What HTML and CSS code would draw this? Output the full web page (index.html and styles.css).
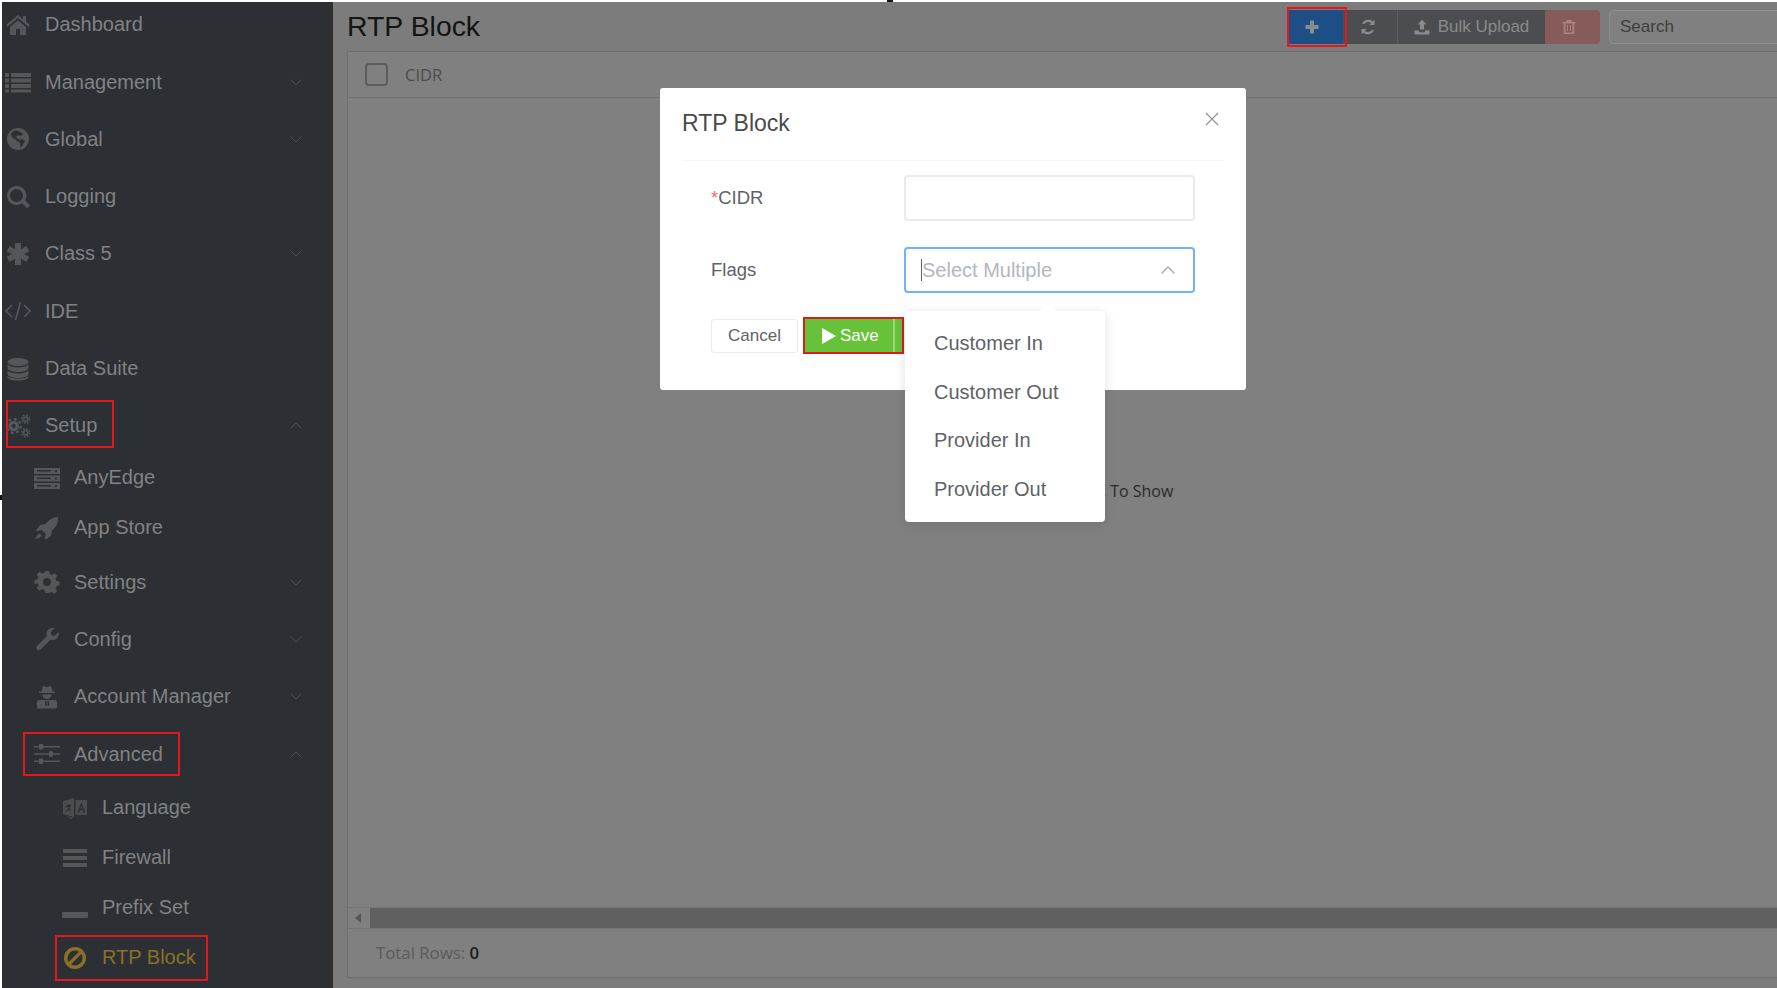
FILE: index.html
```html
<!DOCTYPE html>
<html>
<head>
    <link rel="stylesheet" href="styles.css">
</head>
<body>
    <div class="sidebar">
        <div class="nav-row nav-first">
            <svg class="nav-icon" viewBox="0 0 26 24"><path d="M13 3 1 13l1.500 1.800L13 6l10.500 8.800L25 13l-4-3.300V4h-3v3.200zM5 15v8h6v-6h4v6h6v-8l-8-6.700z"/></svg>
            <span>Dashboard</span>
        </div>
        <div class="nav-row">
            <svg class="nav-icon" viewBox="0 0 26 24"><path d="M0 3h4v4H0zM6 3h20v4H6zM0 8.500h4v4H0zM6 8.500h20v4H6zM0 14h4v4H0zM6 14h20v4H6zM0 19.500h4v3H0zM6 19.500h20v3H6z"/></svg>
            <span>Management</span>
            <svg class="chevron" viewBox="0 0 12 7"><path d="M0.500 0.500 6 6l5.500-5.500"/></svg>
        </div>
        <div class="nav-row">
            <svg class="nav-icon" viewBox="0 0 26 24"><path fill-rule="evenodd" d="M13 1a11 11 0 1 0 0 22 11 11 0 0 0 0-22zM9 4c2-1 4 0 6 1l3 2-2 2-3-1-2 2 3 3 3-1 3 2-3 5-2 1 0-4-4-3-3-2-2-3 1-3z"/></svg>
            <span>Global</span>
            <svg class="chevron" viewBox="0 0 12 7"><path d="M0.500 0.500 6 6l5.500-5.500"/></svg>
        </div>
        <div class="nav-row">
            <svg class="nav-icon" viewBox="0 0 26 24"><path fill-rule="evenodd" d="M11.500 1a9.500 9.500 0 1 0 5.600 17.200l5 5 2.900-2.900-5-5A9.500 9.500 0 0 0 11.500 1zm0 3a6.500 6.500 0 1 1 0 13 6.500 6.500 0 0 1 0-13z"/></svg>
            <span>Logging</span>
        </div>
        <div class="nav-row">
            <svg class="nav-icon" viewBox="0 0 26 24"><path d="M10 1h6v6.200l5.300-3.100 3 5.200L19 12l5.300 2.700-3 5.200-5.300-3.100V23h-6v-6.200l-5.300 3.100-3-5.200L7 12 1.700 9.300l3-5.200L10 7.200z"/></svg>
            <span>Class 5</span>
            <svg class="chevron" viewBox="0 0 12 7"><path d="M0.500 0.500 6 6l5.500-5.500"/></svg>
        </div>
        <div class="nav-row">
            <svg class="nav-icon nav-line" viewBox="0 0 26 24"><path d="M7 6 1 12l6 6M19 6l6 6-6 6M15.500 3l-5 18"/></svg>
            <span>IDE</span>
        </div>
        <div class="nav-row">
            <svg class="nav-icon" viewBox="0 0 26 24"><path d="M13 1c6 0 10.500 1.800 10.500 4S19 9 13 9 2.500 7.200 2.500 5 7 1 13 1zM2.500 7.500C4.500 9.500 9 10.500 13 10.500s8.500-1 10.500-3V11c0 2.200-4.500 4-10.500 4S2.500 13.200 2.500 11zM2.500 13.500c2 2 6.500 3 10.500 3s8.500-1 10.500-3V17c0 2.200-4.500 4-10.500 4S2.500 19.200 2.500 17z"/><path d="M2.500 19c2 2 6.500 2.500 10.500 2.500s8.500-.5 10.500-2.500v1c0 2.200-4.500 3.500-10.500 3.500S2.500 22.200 2.500 20z"/></svg>
            <span>Data Suite</span>
        </div>
        <div class="nav-row">
            <svg class="nav-icon nav-gears" viewBox="0 0 27 24">
                <circle cx="9" cy="12" r="3.800" stroke-width="3.400"/>
                <circle cx="9" cy="12" r="7.300" stroke-width="2.400" stroke-dasharray="3 2.730"/>
                <circle cx="21.500" cy="5" r="2.300" stroke-width="1.600"/>
                <circle cx="21.500" cy="5" r="4.200" stroke-width="1.600" stroke-dasharray="1.700 1.600"/>
                <circle cx="21.500" cy="19" r="2.300" stroke-width="1.600"/>
                <circle cx="21.500" cy="19" r="4.200" stroke-width="1.600" stroke-dasharray="1.700 1.600"/>
            </svg>
            <span>Setup</span>
            <svg class="chevron" viewBox="0 0 12 7"><path d="M0.500 6.500 6 1l5.500 5.500"/></svg>
        </div>

        <div class="nav-row nav-sub nav-short nav-lift">
            <svg class="nav-icon" viewBox="0 0 26 24"><path fill-rule="evenodd" d="M0 2h26v6H0zM3 4v1.500h14V4zM21 4v2h2V4zM0 9.500h26v6H0zM3 11.500V13h14v-1.500zM21 11.500v2h2v-2zM0 17h26v6H0zM3 19v1.500h14V19zM21 19v2h2v-2z"/></svg>
            <span>AnyEdge</span>
        </div>
        <div class="nav-row nav-sub nav-short nav-lift-small">
            <svg class="nav-icon" viewBox="0 0 26 24"><path d="M24 1c.5 6-2 10-6 13.500L17 20l-5.500 3.500-1-1 1.200-4.500-4-4-4.500 1.200-1-1L6 9 11.500 8C15 4 19 1 24 1zM5 17.500c1 0 2.500 1.500 2.500 2.500-1 1.500-3.500 2.500-6 3 .5-2.500 2-4.500 3.500-5.500z"/></svg>
            <span>App Store</span>
        </div>
        <div class="nav-row nav-sub">
            <svg class="nav-icon" viewBox="0 0 26 24"><path fill-rule="evenodd" d="M11 1h4l.7 3.200 2 .8 2.800-1.800 2.800 2.800-1.800 2.800.8 2 3.200.7v4l-3.200.7-.8 2 1.800 2.800-2.800 2.800-2.800-1.800-2 .8L15 23h-4l-.7-3.200-2-.8-2.800 1.800-2.800-2.800 1.800-2.800-.8-2L.5 14v-4l3.200-.7.8-2-1.800-2.800 2.800-2.800 2.800 1.800 2-.8zM13 8a4 4 0 1 0 0 8 4 4 0 0 0 0-8z"/></svg>
            <span>Settings</span>
            <svg class="chevron" viewBox="0 0 12 7"><path d="M0.500 0.500 6 6l5.500-5.500"/></svg>
        </div>
        <div class="nav-row nav-sub">
            <svg class="nav-icon" viewBox="0 0 26 24"><path d="M24.500 5c.8 3-.2 5.500-2.500 7-2 1.200-4 1.200-5.500.5L6.500 22.500c-1 1-2.500 1-3.500 0s-1-2.500 0-3.500l10-10c-.8-2-.5-4 .8-5.800C15.300 1.200 18 .5 20.500 1.200L16.500 5.200l1 3 3 1z"/></svg>
            <span>Config</span>
            <svg class="chevron" viewBox="0 0 12 7"><path d="M0.500 0.500 6 6l5.500-5.500"/></svg>
        </div>
        <div class="nav-row nav-sub">
            <svg class="nav-icon" viewBox="0 0 26 24"><path fill-rule="evenodd" d="M9 1l4 1 4-1 1.500 5.500h2.500V8H5V6.500h2.500zM8.500 9.500h9c0 2.500-2 4.500-4.500 4.500s-4.500-2-4.500-4.500zM5 15h16c1.500 0 2 1 2 2v5c0 1-.5 1.500-1.500 1.500h-17C3.500 23.500 3 23 3 22v-5c0-1 .5-2 2-2zM11 16v5h1.500v-5zM13.500 16v5H15v-5z"/></svg>
            <span>Account Manager</span>
            <svg class="chevron" viewBox="0 0 12 7"><path d="M0.500 0.500 6 6l5.500-5.500"/></svg>
        </div>
        <div class="nav-row nav-sub">
            <svg class="nav-icon" viewBox="0 0 26 24"><path d="M0 4h5V2h4v2h17v1.500H9v2H5v-2H0zM0 11.300h15v-2h4v2h7v1.500h-7v2h-4v-2H0zM0 18.500h5v-2h4v2h17V20H9v2H5v-2H0z"/></svg>
            <span>Advanced</span>
            <svg class="chevron" viewBox="0 0 12 7"><path d="M0.500 6.500 6 1l5.500 5.500"/></svg>
        </div>

        <div class="nav-row nav-subsub">
            <svg class="nav-icon nav-faint" viewBox="0 0 26 24"><path fill-rule="evenodd" d="M1 5l11-3v19L1 18zM6 8l-1 2H3v1.200h3.500C6 12.500 5 14 3.500 15l.7 1c1-.7 1.800-1.500 2.500-2.500l1.500 1.500.7-1-1.500-1.800c.4-.8.700-1.600.8-2.200H9V8.800H7zM13.500 4H25v15H13.500zM19.200 6.500 15.500 16.500h2l.8-2.200h2.400l.8 2.200h2zM19.500 9.500l.7 3h-1.500z"/><path d="M4 19.500 9 23l3-1.500H9z"/></svg>
            <span>Language</span>
        </div>
        <div class="nav-row nav-subsub">
            <svg class="nav-icon" viewBox="0 0 26 24"><path d="M1 3h24v4H1zM1 10h24v4H1zM1 17h24v4H1z"/></svg>
            <span>Firewall</span>
        </div>
        <div class="nav-row nav-subsub">
            <svg class="nav-icon nav-low" viewBox="0 0 26 24"><rect x="0" y="9" width="26" height="6" rx="1"/></svg>
            <span>Prefix Set</span>
        </div>
        <div class="nav-row nav-subsub nav-active">
            <svg class="nav-icon" viewBox="0 0 26 24"><path fill-rule="evenodd" d="M13 1a11 11 0 1 0 0 22 11 11 0 0 0 0-22zm0 3.500c1.500 0 2.900.4 4 1.200L6.700 16c-.8-1.100-1.200-2.500-1.200-4A7.500 7.500 0 0 1 13 4.500zm6.300 3.500c.8 1.100 1.200 2.500 1.200 4a7.500 7.500 0 0 1-11.500 6.300z"/></svg>
            <span>RTP Block</span>
        </div>

        <div class="mark mark-setup"></div>
        <div class="mark mark-advanced"></div>
        <div class="mark mark-rtp"></div>
    </div>

    <div class="main">
        <div class="page-head">
            <h1>RTP Block</h1>
            <div class="toolbar">
                <div class="btn-group">
                    <button class="tool-btn tool-add">
                        <svg class="tool-icon" viewBox="0 0 16 16"><path d="M6 1.500h4V6h4.500v4H10v4.500H6V10H1.500V6H6z"/></svg>
                    </button>
                    <button class="tool-btn tool-refresh">
                        <svg class="tool-icon" viewBox="0 0 16 16"><path d="M13.800 1.500v4.700H9.100l1.800-1.800C9 3 6.200 3.400 4.700 5.400L2.600 5C4.500 1.500 9 .6 12.200 3zM2.200 14.500V9.800h4.700l-1.800 1.800c1.900 1.400 4.700 1 6.200-1l2.100.4c-1.900 3.500-6.400 4.400-9.600 2z"/></svg>
                    </button>
                    <button class="tool-btn tool-upload">
                        <svg class="tool-icon" viewBox="0 0 16 16"><path d="M8 .5 12.500 5.500H10V10.500H6V5.500H3.500zM0.500 11.500H5v.8c0 .5.500 1 1 1h4c.5 0 1-.5 1-1v-.8h4.500V15c0 .3-.2.500-.5.500H1c-.3 0-.5-.2-.5-.5z"/></svg>
                        Bulk Upload
                    </button>
                    <button class="tool-btn tool-delete">
                        <svg class="tool-icon" viewBox="0 0 16 16"><path fill-rule="evenodd" d="M5.500 1h5l1 2h3v1.500h-1.200V15H2.700V4.500H1.500V3h3zM4.500 4.500V13.500h7V4.500zM6 6h1v6H6zM9 6h1v6H9z"/></svg>
                    </button>
                </div>
                <div class="search">Search</div>
            </div>
        </div>

        <div class="grid-panel">
            <div class="grid-head">
                <span class="grid-check"></span>
                <span class="grid-col">CIDR</span>
            </div>
            <div class="grid-body">No Rows To Show</div>
            <div class="grid-scroll">
                <span class="scroll-btn"></span>
                <span class="scroll-thumb"></span>
            </div>
            <div class="grid-foot">Total Rows: <b>0</b></div>
        </div>
        <div class="mark mark-add"></div>
    </div>

    <div class="modal">
        <div class="modal-head">
            <span class="modal-title">RTP Block</span>
            <svg class="modal-close" viewBox="0 0 14 14"><path d="M1 1l12 12M13 1 1 13"/></svg>
        </div>
        <div class="modal-body">
            <div class="form-row">
                <label class="form-label"><span class="required">*</span>CIDR</label>
                <div class="field"></div>
            </div>
            <div class="form-row">
                <label class="form-label">Flags</label>
                <div class="field field-open">
                    <span class="caret"></span>
                    <span class="placeholder">Select Multiple</span>
                    <svg class="field-arrow" viewBox="0 0 14 8"><path d="M0.500 7.500 7 1l6.500 6.500"/></svg>
                </div>
            </div>
            <div class="form-actions">
                <button class="btn-cancel">Cancel</button>
                <button class="btn-save">
                    <svg class="save-icon" viewBox="0 0 14 16"><path d="M0 0 14 8 0 16z"/></svg>
                    Save
                </button>
            </div>
        </div>
        <div class="dropdown">
            <div class="dropdown-item">Customer In</div>
            <div class="dropdown-item">Customer Out</div>
            <div class="dropdown-item">Provider In</div>
            <div class="dropdown-item">Provider Out</div>
        </div>
    </div>

    <div class="tick tick-top"></div>
    <div class="tick tick-left"></div>
</body>
</html>
```

FILE: styles.css
```css
* {
    box-sizing: border-box;
}

html, body {
    margin: 0;
    height: 988px;
    overflow: hidden;
}

body {
    position: relative;
    display: flex;
    padding: 2px 0 0 2px;
    background-color: #ffffff;
    font-family: "Liberation Sans", Arial, sans-serif;
}

/* sidebar */
.sidebar {
    position: relative;
    flex: none;
    width: 331px;
    background-color: #2c2f33;
    color: #808285;
}

.nav-row {
    display: flex;
    align-items: center;
    height: 57.3px;
    padding: 0 31px 0 3px;
    font-size: 20px;
}

.nav-first {
    height: 44px;
    margin-bottom: 7.4px;
}

.nav-sub {
    padding-left: 32px;
}

.nav-subsub {
    height: 50px;
    padding-left: 60px;
}

.nav-short {
    height: 49.5px;
}

.nav-lift {
    padding-bottom: 3.4px;
}

.nav-lift-small {
    padding-bottom: 2px;
}

.nav-icon {
    flex: none;
    width: 26px;
    height: 24px;
    margin-right: 14px;
    fill: #54575a;
}

.nav-line {
    fill: none;
    stroke: #54575a;
    stroke-width: 1.6;
}

.nav-gears {
    fill: none;
    stroke: #54575a;
}

.nav-faint {
    opacity: 0.75;
}

.nav-low {
    transform: translateY(7px);
}

.chevron {
    width: 12px;
    height: 7px;
    margin-left: auto;
    fill: none;
    stroke: #4c4f52;
    stroke-width: 1;
}

.nav-active {
    color: #8a7128;
}

.nav-active .nav-icon {
    fill: #8a7128;
}

/* red annotation boxes */
.mark {
    position: absolute;
    border: 2px solid #e3181f;
}

.mark-setup {
    left: 4px;
    top: 398px;
    width: 108px;
    height: 48px;
}

.mark-advanced {
    left: 21px;
    top: 730px;
    width: 157px;
    height: 44px;
}

.mark-rtp {
    left: 53px;
    top: 933px;
    width: 153px;
    height: 46px;
}

.mark-add {
    left: 954px;
    top: 5px;
    width: 60px;
    height: 40px;
}

/* page behind the modal */
.main {
    position: relative;
    flex: 1;
    min-width: 0;
    overflow: hidden;
    padding-left: 14px;
    background-color: #7b7c7b;
}

.page-head {
    display: flex;
    align-items: center;
    width: 1526px;
    height: 49px;
}

h1 {
    margin: 0;
    font-size: 28.4px;
    font-weight: 400;
    color: #141414;
}

.toolbar {
    display: flex;
    gap: 9px;
    margin-left: auto;
}

.btn-group {
    display: flex;
    height: 34px;
}

.tool-btn {
    display: flex;
    align-items: center;
    justify-content: center;
    gap: 8px;
    height: 34px;
    border: none;
    padding: 0;
    background-color: #4c4d50;
    color: #8a8b8c;
    font-family: inherit;
    font-size: 17px;
}

.tool-icon {
    width: 16px;
    height: 16px;
    fill: #8a8b8c;
}

.tool-add {
    width: 55px;
    padding-right: 7px;
    background-color: #1d4f85;
}

.tool-refresh {
    width: 55px;
    padding-right: 5px;
    border-right: 1px solid #5c5d60;
}

.tool-refresh .tool-icon {
    width: 18px;
    height: 18px;
}

.tool-upload {
    width: 147px;
}

.tool-delete {
    width: 55px;
    padding-right: 7px;
    border-radius: 0 4px 4px 0;
    background-color: #875b5a;
}

.tool-delete .tool-icon {
    fill: #a88382;
}

.search {
    width: 264px;
    height: 34px;
    padding: 0 10px;
    border: 1px solid #8d8e8d;
    border-radius: 4px;
    background-color: #7f807f;
    color: #3e3e3e;
    font-size: 17px;
    line-height: 32px;
}

.grid-panel {
    display: flex;
    flex-direction: column;
    width: 1526px;
    height: 927px;
    border: 1px solid #6e6f6e;
    background-color: #7f807f;
    font-family: "Open Sans", Arial, sans-serif;
}

.grid-head {
    display: flex;
    align-items: center;
    gap: 17px;
    height: 46px;
    padding-left: 17px;
    border-bottom: 1px solid #707170;
}

.grid-check {
    width: 23px;
    height: 23px;
    border: 2px solid #5b5d5d;
    border-radius: 4px;
}

.grid-col {
    font-size: 16.5px;
    font-weight: 500;
    color: #4c4d4d;
}

.grid-body {
    display: flex;
    align-items: center;
    justify-content: center;
    flex: 1;
    padding: 0 6px 23px 0;
    font-size: 16px;
    color: #2b2b2b;
}

.grid-scroll {
    display: flex;
    height: 21px;
    border-top: 1px solid #747574;
}

.scroll-btn {
    position: relative;
    width: 22px;
}

.scroll-btn::before {
    content: "";
    position: absolute;
    left: 7px;
    top: 5px;
    border: 5px solid transparent;
    border-left: none;
    border-right: 6px solid #565756;
}

.scroll-thumb {
    flex: 1;
    background-color: #606060;
}

.grid-foot {
    height: 49px;
    padding: 12px 0 0 28px;
    border-top: 1px solid #747574;
    font-size: 16.8px;
    color: #5a5b5b;
}

.grid-foot b {
    font-weight: 600;
    color: #1c1c1c;
}

/* modal */
.modal {
    position: absolute;
    left: 660px;
    top: 88px;
    width: 586px;
    height: 302px;
    border-radius: 3px;
    background-color: #ffffff;
}

.modal-head {
    position: relative;
    height: 73px;
    margin: 0 22px;
    border-bottom: 1px solid #f4f6f8;
    padding-top: 22px;
}

.modal-title {
    font-size: 23px;
    color: #4a4a4a;
}

.modal-close {
    position: absolute;
    right: 5px;
    top: 24px;
    width: 14px;
    height: 14px;
    fill: none;
    stroke: #909399;
    stroke-width: 1.3;
}

.modal-body {
    display: flex;
    flex-direction: column;
    gap: 26px;
    padding: 14px 0 0 51px;
}

.form-row {
    display: flex;
    align-items: center;
}

.form-label {
    width: 193px;
    margin-bottom: 1px;
    font-size: 18.5px;
    color: #606266;
}

.required {
    color: #f56c6c;
}

.field {
    display: flex;
    align-items: center;
    width: 291px;
    height: 46px;
    padding: 0 18px 0 15px;
    border: 2px solid #e8ebf0;
    border-radius: 4px;
}

.field-open {
    border-color: #6db3fb;
}

.caret {
    width: 1px;
    height: 22px;
    background-color: #606266;
}

.placeholder {
    font-size: 20px;
    color: #b3b6bd;
}

.field-arrow {
    width: 14px;
    height: 8px;
    margin-left: auto;
    fill: none;
    stroke: #a8abb2;
    stroke-width: 1.3;
}

.form-actions {
    display: flex;
    align-items: center;
    gap: 5px;
    margin-top: -2px;
}

.btn-cancel {
    width: 87px;
    height: 34px;
    border: 1px solid #e8ebf0;
    border-radius: 3px;
    background-color: #ffffff;
    color: #606266;
    font-family: inherit;
    font-size: 17px;
}

.btn-save {
    display: flex;
    align-items: center;
    gap: 4px;
    width: 101px;
    height: 37px;
    padding-left: 17px;
    border: 2px solid #e3181f;
    background: linear-gradient(to right, #67c23a 88px, #9ad97c 88px, #9ad97c 90px, #67c23a 90px);
    color: #ffffff;
    font-family: inherit;
    font-size: 17px;
}

.save-icon {
    width: 14px;
    height: 16px;
    fill: #ffffff;
}

.dropdown {
    position: absolute;
    left: 245px;
    top: 223px;
    width: 200px;
    height: 211px;
    padding-top: 8px;
    border-radius: 4px;
    background-color: #ffffff;
    box-shadow: 0 2px 12px rgba(0, 0, 0, 0.12);
}

.dropdown::before {
    content: "";
    position: absolute;
    left: 135px;
    top: -8px;
    border: 8px solid transparent;
    border-top: none;
    border-bottom-color: #ffffff;
}

.dropdown-item {
    height: 48.7px;
    padding-left: 29px;
    font-size: 20px;
    line-height: 48px;
    color: #606266;
}

/* stray marks at the edge of the capture */
.tick {
    position: absolute;
    background-color: #141414;
}

.tick-top {
    left: 887px;
    top: 0;
    width: 6px;
    height: 2px;
}

.tick-left {
    left: 0;
    top: 495px;
    width: 2px;
    height: 5px;
}
```
